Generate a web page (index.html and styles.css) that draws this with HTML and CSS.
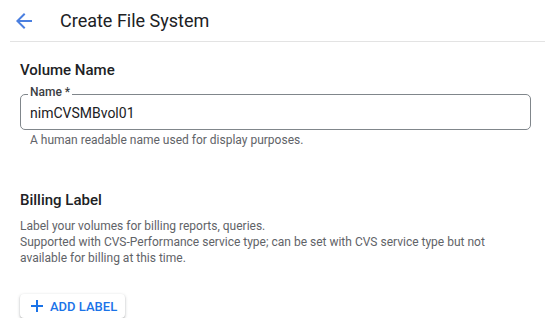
FILE: index.html
```html
<!DOCTYPE html>
<html lang="en">

<head>
    <meta charset="UTF-8">
    <meta name="viewport" content="width=device-width, initial-scale=1.0">
    <title>Create File System</title>
    <link rel="stylesheet" href="styles.css">
</head>

<body>
    <header class="topbar">
        <button class="back" aria-label="Back">
            <svg viewBox="0 0 24 24" width="24" height="24">
                <path d="M20 11H7.83l5.59-5.59L12 4l-8 8 8 8 1.41-1.41L7.83 13H20v-2z" fill="currentColor" />
            </svg>
        </button>
        <h1 class="title">Create File System</h1>
    </header>

    <main class="content">
        <section class="section">
            <h2 class="section-title">Volume Name</h2>
            <div class="field">
                <label class="field-label" for="vol-name">Name *</label>
                <input id="vol-name" class="field-input" type="text" value="nimCVSMBvol01">
            </div>
            <p class="hint">A human readable name used for display purposes.</p>
        </section>

        <section class="section billing">
            <h2 class="section-title">Billing Label</h2>
            <p class="desc">
                Label your volumes for billing reports, queries.<br>
                Supported with CVS-Performance service type; can be set with CVS service type but not
                available for billing at this time.
            </p>
            <button class="add-btn">
                <svg viewBox="0 0 12 12" width="12" height="12">
                    <path d="M5 0h2v5h5v2H7v5H5V7H0V5h5z" fill="currentColor" />
                </svg>
                <span>ADD LABEL</span>
            </button>
        </section>
    </main>
</body>

</html>
```

FILE: styles.css
```css
body {
    font-family: 'Roboto', 'Liberation Sans', sans-serif;
    color: #202124;
    background: #fff;
    margin: 0;
    padding: 0;
}

.topbar {
    display: flex;
    align-items: center;
    height: 41px;
    margin: 0 2px 0 10px;
    border-bottom: 1px solid #e3e3e3;
}

.back {
    display: flex;
    padding: 0;
    margin: 0 0 0 2px;
    border: none;
    background: none;
    color: #4a7fe0;
    cursor: pointer;
}

.title {
    margin: 0 0 0 24px;
    font-size: 18px;
    font-weight: 400;
    color: #202124;
}

.content {
    padding: 0 16px 0 20px;
}

.section-title {
    margin: 0;
    font-size: 15px;
    line-height: 20px;
    font-weight: 500;
    color: #202124;
}

.section {
    padding-top: 18px;
}

.field {
    position: relative;
    margin-top: 14px;
}

.field-label {
    position: absolute;
    left: 8px;
    top: -9px;
    padding: 0 2px;
    background: #fff;
    font-size: 12px;
    line-height: 14px;
    font-weight: 500;
    color: #3c4043;
}

.field-input {
    display: block;
    box-sizing: border-box;
    width: 100%;
    height: 36px;
    padding: 2px 9px 0;
    border: 1px solid #80868b;
    border-radius: 5px;
    font-family: inherit;
    font-size: 14px;
    color: #202124;
    outline: none;
}

.hint {
    margin: 2px 0 0 10px;
    font-size: 12px;
    line-height: 16px;
    color: #5f6368;
}

.billing {
    padding-top: 42px;
}

.desc {
    margin: 8px 0 0;
    font-size: 12px;
    line-height: 16px;
    color: #5f6368;
}

.add-btn {
    display: flex;
    align-items: center;
    gap: 7px;
    height: 24px;
    margin-top: 28px;
    padding: 0 8px 0 11px;
    border: none;
    border-radius: 4px;
    background: #fff;
    color: #1a73e8;
    font-family: inherit;
    font-size: 13px;
    font-weight: 500;
    box-shadow: 0 1px 3px rgba(60, 64, 67, 0.35), 0 1px 1px rgba(60, 64, 67, 0.15);
    cursor: pointer;
}
```
